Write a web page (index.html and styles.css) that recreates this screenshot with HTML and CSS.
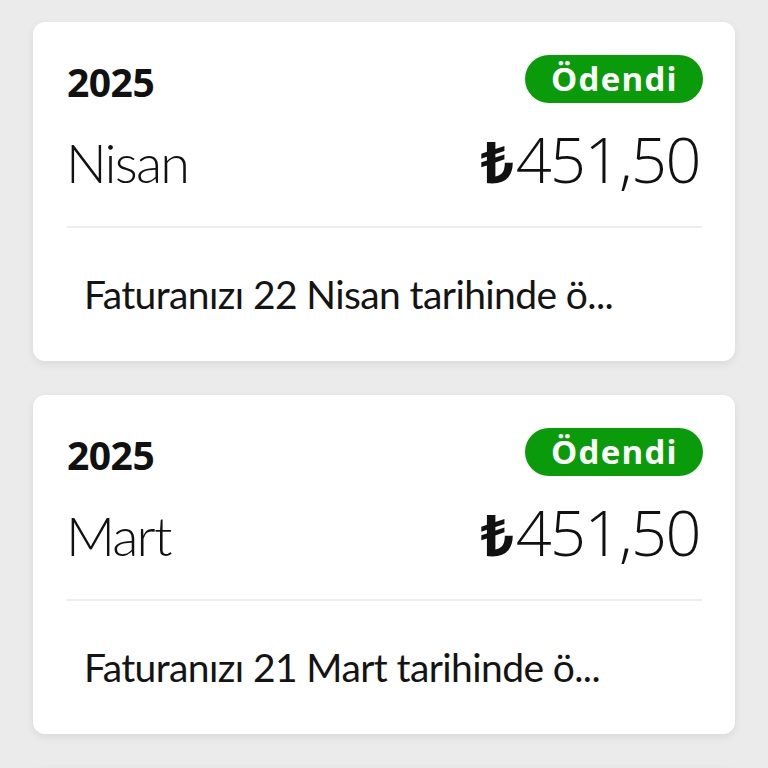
FILE: index.html
```html
<!DOCTYPE html>
<html lang="tr">
  <head>
    <meta charset="UTF-8" />
    <meta name="viewport" content="width=device-width, initial-scale=1.0" />
    <title>Faturalar</title>
    <link rel="stylesheet" href="styles.css">
  </head>
  <body>
    <div class="list">
      <div class="card">
        <div class="top">
          <span class="year">2025</span>
          <span class="badge">Ödendi</span>
        </div>
        <div class="main">
          <span class="month">Nisan</span>
          <span class="amount"><span class="lira">₺</span>451,50</span>
        </div>
        <div class="line"></div>
        <p class="desc">Faturanızı 22 Nisan tarihinde ö...</p>
      </div>

      <div class="card">
        <div class="top">
          <span class="year">2025</span>
          <span class="badge">Ödendi</span>
        </div>
        <div class="main">
          <span class="month">Mart</span>
          <span class="amount"><span class="lira">₺</span>451,50</span>
        </div>
        <div class="line"></div>
        <p class="desc">Faturanızı 21 Mart tarihinde ö...</p>
      </div>

      <div class="card"></div>
    </div>
  </body>
</html>
```
FILE: styles.css
```css
* {
  margin: 0;
  padding: 0;
  box-sizing: border-box;
}

body {
  background: #ebebeb;
  font-family: "Open Sans", "Noto Sans", sans-serif;
  color: #111;
}

.list {
  display: flex;
  flex-direction: column;
  gap: 34px;
  padding: 22px 33px 0;
  height: 768px;
  overflow: hidden;
}

.card {
  background: #fff;
  border-radius: 12px;
  padding: 33px 33px 41px 34px;
  box-shadow: 0 3px 8px rgba(0, 0, 0, 0.08);
  min-height: 339px;
  flex-shrink: 0;
}

.top {
  display: flex;
  justify-content: space-between;
  align-items: flex-start;
  height: 48px;
}

.year {
  font-weight: 700;
  font-size: 39px;
  line-height: 48px;
  padding-top: 3px;
  letter-spacing: -0.5px;
}

.badge {
  background: #099b09;
  color: #fff;
  font-weight: 700;
  font-size: 33px;
  line-height: 48px;
  height: 48px;
  padding: 0 25px 0 26px;
  border-radius: 24px;
  letter-spacing: 1.3px;
  margin-right: -1px;
}

.main {
  display: flex;
  justify-content: space-between;
  align-items: baseline;
  margin-top: 24px;
  height: 64px;
}

.month {
  font-family: Lato, "Open Sans", sans-serif;
  font-weight: 300;
  font-size: 54px;
  line-height: 64px;
  letter-spacing: -1.8px;
  margin-left: -1px;
}

.amount {
  font-weight: 300;
  font-size: 63px;
  line-height: 64px;
  letter-spacing: -1.5px;
  margin-right: 2px;
}

.lira {
  font-weight: 700;
  font-size: 58px;
  margin-right: 3px;
}

.line {
  height: 2px;
  background: #eeeeee;
  margin-top: 35px;
}

.desc {
  font-family: Lato, "Open Sans", sans-serif;
  font-size: 39px;
  line-height: 50px;
  letter-spacing: -0.6px;
  margin-top: 41px;
  padding-left: 17px;
  white-space: nowrap;
  color: #141414;
}
```
